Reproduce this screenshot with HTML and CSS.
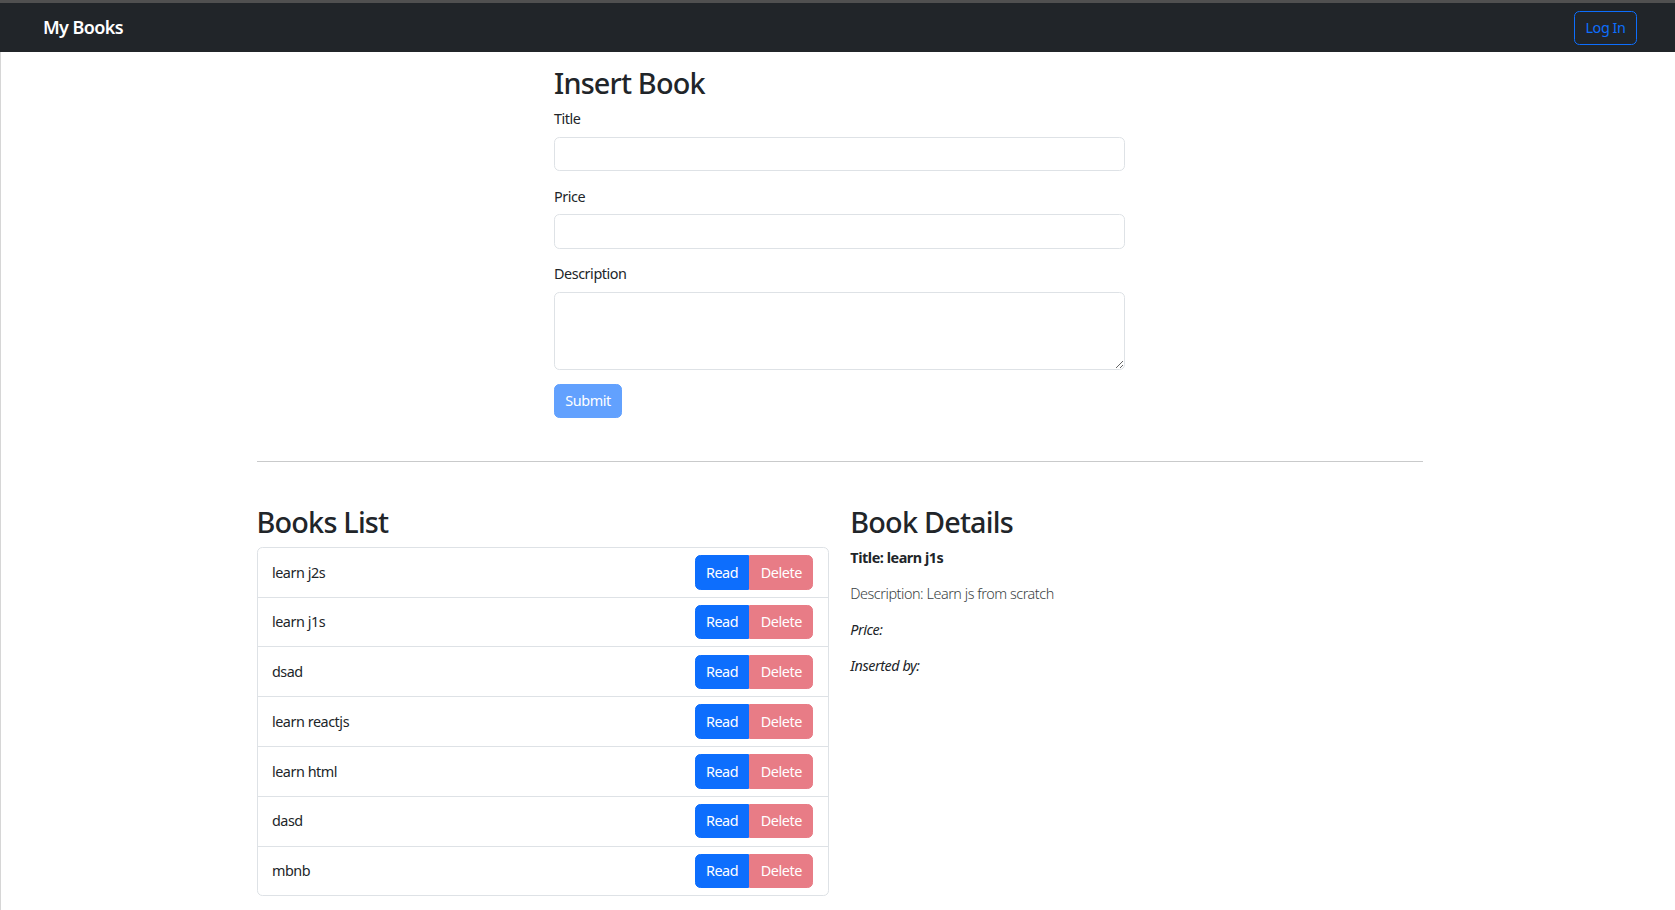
FILE: index.html
```html
<!DOCTYPE html>
<html lang="en">
<head>
<meta charset="utf-8">
<title>My Books</title>
<link rel="stylesheet" href="styles.css">
</head>
<body>
<div class="topline"></div>
<nav class="navbar">
  <a class="brand" href="#">My Books</a>
  <button class="btn-login" type="button">Log In</button>
</nav>
<main class="page">
  <div class="container">
    <section class="insert">
      <h2 class="heading">Insert Book</h2>
      <form class="form">
        <div class="field">
          <label class="label">Title</label>
          <input class="control" type="text">
        </div>
        <div class="field">
          <label class="label">Price</label>
          <input class="control" type="text">
        </div>
        <div class="field">
          <label class="label">Description</label>
          <textarea class="control area" rows="3"></textarea>
        </div>
        <button class="btn-submit" type="button" disabled>Submit</button>
      </form>
    </section>
    <hr class="divider">
    <div class="row">
      <div class="col">
        <h2 class="heading">Books List</h2>
        <ul class="list">
          <li class="item"><span class="name">learn j2s</span><div class="group"><button class="btn btn-read">Read</button><button class="btn btn-delete">Delete</button></div></li>
          <li class="item"><span class="name">learn j1s</span><div class="group"><button class="btn btn-read">Read</button><button class="btn btn-delete">Delete</button></div></li>
          <li class="item"><span class="name">dsad</span><div class="group"><button class="btn btn-read">Read</button><button class="btn btn-delete">Delete</button></div></li>
          <li class="item"><span class="name">learn reactjs</span><div class="group"><button class="btn btn-read">Read</button><button class="btn btn-delete">Delete</button></div></li>
          <li class="item"><span class="name">learn html</span><div class="group"><button class="btn btn-read">Read</button><button class="btn btn-delete">Delete</button></div></li>
          <li class="item"><span class="name">dasd</span><div class="group"><button class="btn btn-read">Read</button><button class="btn btn-delete">Delete</button></div></li>
          <li class="item"><span class="name">mbnb</span><div class="group"><button class="btn btn-read">Read</button><button class="btn btn-delete">Delete</button></div></li>
        </ul>
      </div>
      <div class="col">
        <h2 class="heading">Book Details</h2>
        <p class="detail detail-title">Title: learn j1s</p>
        <p class="detail detail-light">Description: Learn js from scratch</p>
        <p class="detail detail-italic">Price:</p>
        <p class="detail detail-italic">Inserted by:</p>
      </div>
    </div>
  </div>
</main>
</body>
</html>
```

FILE: styles.css
```css
* {
  box-sizing: border-box;
}

html, body {
  margin: 0;
  padding: 0;
  height: 100%;
}

body {
  font-family: "Noto Sans", "Open Sans", sans-serif;
  font-size: 14.4px;
  line-height: 21.6px;
  letter-spacing: -0.45px;
  color: #212529;
  background: #fff;
  display: flex;
  flex-direction: column;
}

.topline {
  height: 3px;
  background: #505050;
  flex: none;
}

.navbar {
  flex: none;
  height: 49px;
  background: #212529;
  display: flex;
  align-items: center;
  justify-content: space-between;
  padding: 0 38px 0 43px;
}

.brand {
  color: #fff;
  text-decoration: none;
  font-size: 18px;
  font-weight: 600;
  line-height: 27px;
  letter-spacing: -0.6px;
}

.btn-login {
  font-family: inherit;
  font-size: 14.4px;
  line-height: 21.6px;
  letter-spacing: -0.45px;
  width: 63px;
  height: 34px;
  padding: 0;
  color: #0d6efd;
  background: transparent;
  border: 1px solid #0d6efd;
  border-radius: 5.4px;
}

.page {
  flex: 1;
  box-shadow: inset 1px 0 0 #d6d6d6;
  padding-left: 4px;
}

.container {
  width: 1166px;
  margin: 0 auto;
}

.insert {
  width: 571px;
  margin: 14.4px auto 0;
}

.heading {
  font-size: 28.8px;
  line-height: 34.56px;
  font-weight: 500;
  letter-spacing: -0.8px;
  margin: 0 0 7.2px;
}

.field {
  margin-bottom: 14.4px;
}

.label {
  display: block;
  margin-bottom: 7.2px;
}

.control {
  display: block;
  width: 100%;
  height: 34.4px;
  font-family: inherit;
  font-size: 14.4px;
  line-height: 21.6px;
  padding: 5.4px 10.8px;
  border: 1px solid #dee2e6;
  border-radius: 5.4px;
  background: #fff;
  color: #212529;
}

.area {
  height: 77.6px;
  resize: vertical;
}

.btn-submit {
  font-family: inherit;
  font-size: 14.4px;
  line-height: 21.6px;
  letter-spacing: -0.45px;
  height: 34.4px;
  width: 68px;
  padding: 0;
  color: #fff;
  background: #62a1fe;
  border: 1px solid #62a1fe;
  border-radius: 5.4px;
}

.divider {
  margin: 42.6px 0 43.2px;
  border: 0;
  border-top: 1px solid #c9cacb;
}

.row {
  display: flex;
  gap: 21.6px;
}

.col {
  flex: 1;
  min-width: 0;
}

.list {
  list-style: none;
  margin: 0;
  padding: 0;
  border: 1px solid #dee2e6;
  border-radius: 5.4px;
}

.item {
  display: flex;
  align-items: center;
  justify-content: space-between;
  padding: 7.2px 14.4px;
  border-bottom: 1px solid #dee2e6;
}

.item:last-child {
  border-bottom: 0;
}

.group {
  display: flex;
}

.btn {
  font-family: inherit;
  font-size: 14.4px;
  line-height: 21.6px;
  letter-spacing: -0.45px;
  height: 34.4px;
  padding: 0;
  color: #fff;
  border: 1px solid transparent;
}

.btn-read {
  width: 54.5px;
  background: #0d6efd;
  border-color: #0d6efd;
  border-radius: 5.4px 0 0 5.4px;
}

.btn-delete {
  width: 64px;
  background: #e87c86;
  border-color: #e87c86;
  border-radius: 0 5.4px 5.4px 0;
}

.detail {
  margin: 0 0 14.4px;
}

.detail-title {
  font-weight: 700;
}

.detail-light {
  font-weight: 300;
  color: #3a3f44;
}

.detail-italic {
  font-style: italic;
}
```
